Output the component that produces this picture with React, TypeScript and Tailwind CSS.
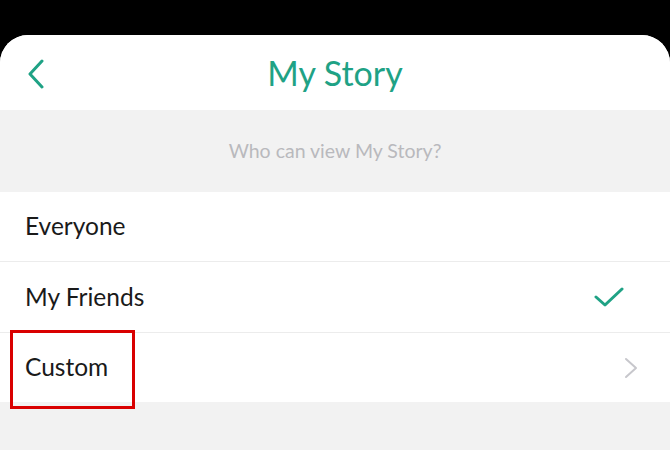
import React from "react";

export default function App() {
  const font = { fontFamily: "Lato, 'Noto Sans', sans-serif" };
  return (
    <div className="w-[670px] h-[450px] bg-black overflow-hidden" style={font}>
      <div className="mt-[35px] h-[415px] bg-[#f2f2f2] rounded-t-[28px] overflow-hidden flex flex-col">
        <div className="h-[75px] bg-white relative flex items-center justify-center">
          <svg className="absolute left-[27px] top-[24px]" width="18" height="30" viewBox="0 0 18 30">
            <path d="M15 2 L3 15 L15 28" fill="none" stroke="#1fa285" strokeWidth="3" strokeLinecap="round" strokeLinejoin="round" />
          </svg>
          <span className="text-[34px] text-[#1fa285] leading-none">My Story</span>
        </div>
        <div className="h-[82px] flex items-center justify-center">
          <span className="text-[19.5px] text-[#b9b9bd]">Who can view My Story?</span>
        </div>
        <div className="bg-white flex flex-col">
          <div className="h-[70px] flex items-center pl-[25px] text-[24.5px] text-[#1a1a1a] border-b border-[#ececec]">Everyone</div>
          <div className="h-[71px] flex items-center justify-between pl-[25px] pr-[46px] text-[24.5px] text-[#1a1a1a] border-b border-[#ececec]">
            <span>My Friends</span>
            <svg width="30" height="22" viewBox="0 0 30 22">
              <path d="M2 11 L11 19 L28 3" fill="none" stroke="#1fa285" strokeWidth="3" strokeLinecap="round" strokeLinejoin="round" />
            </svg>
          </div>
          <div className="h-[69px] flex items-center justify-between pl-[25px] pr-[32px] text-[24.5px] text-[#1a1a1a] relative">
            <span>Custom</span>
            <svg width="14" height="22" viewBox="0 0 14 22">
              <path d="M2 2 L12 11 L2 20" fill="none" stroke="#c7c7cc" strokeWidth="2" strokeLinecap="round" strokeLinejoin="round" />
            </svg>
            <div className="absolute left-[10px] top-[-3px] w-[125px] h-[79px] border-[3px] border-[#d90000]" />
          </div>
        </div>
      </div>
    </div>
  );
}
